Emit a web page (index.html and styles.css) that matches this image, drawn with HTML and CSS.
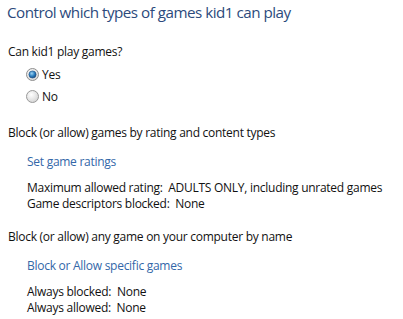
FILE: index.html
```html
<!DOCTYPE html>
<html>
<head>
<meta charset="utf-8">
<link rel="stylesheet" href="styles.css">
</head>
<body>
<div class="page">
  <h1 class="title">Control which types of games kid1 can play</h1>
  <p class="question">Can kid1 play games?</p>
  <div class="radios">
    <label class="radio">
      <svg class="radio-icon" width="13" height="13" viewBox="0 0 13 13">
        <defs>
          <radialGradient id="rg1" cx="0.4" cy="0.35" r="0.7">
            <stop offset="0" stop-color="#ffffff"/>
            <stop offset="1" stop-color="#d4d4d4"/>
          </radialGradient>
          <radialGradient id="dot" cx="0.4" cy="0.35" r="0.7">
            <stop offset="0" stop-color="#9fd3f2"/>
            <stop offset="0.55" stop-color="#2b7fc0"/>
            <stop offset="1" stop-color="#17457a"/>
          </radialGradient>
        </defs>
        <circle cx="6.5" cy="6.5" r="6" fill="url(#rg1)" stroke="#8f8f8f" stroke-width="1"/>
        <circle cx="6.5" cy="6.5" r="3.6" fill="url(#dot)" stroke="#1d4f84" stroke-width="0.6"/>
      </svg>
      <span>Yes</span>
    </label>
    <label class="radio">
      <svg class="radio-icon" width="13" height="13" viewBox="0 0 13 13">
        <defs>
          <radialGradient id="rg2" cx="0.4" cy="0.35" r="0.75">
            <stop offset="0" stop-color="#ffffff"/>
            <stop offset="1" stop-color="#cfcfcf"/>
          </radialGradient>
        </defs>
        <circle cx="6.5" cy="6.5" r="6" fill="url(#rg2)" stroke="#9a9a9a" stroke-width="1"/>
      </svg>
      <span>No</span>
    </label>
  </div>

  <p class="section">Block (or allow) games by rating and content types</p>
  <div class="sub">
    <a class="link" href="#">Set game ratings</a>
    <div class="info">
      <div>Maximum allowed rating:&nbsp; ADULTS ONLY, including unrated games</div>
      <div>Game descriptors blocked:&nbsp; None</div>
    </div>
  </div>

  <p class="section section-2">Block (or allow) any game on your computer by name</p>
  <div class="sub">
    <a class="link" href="#">Block or Allow specific games</a>
    <div class="info">
      <div>Always blocked:&nbsp; None</div>
      <div>Always allowed:&nbsp; None</div>
    </div>
  </div>
</div>
</body>
</html>
```

FILE: styles.css
```css
html, body {
  margin: 0;
  padding: 0;
  background: #ffffff;
}

body {
  font-family: "Open Sans", "Noto Sans", "DejaVu Sans", sans-serif;
  font-size: 12px;
  letter-spacing: -0.27px;
  color: #111111;
}

.page {
  padding: 1px 0 0 8px;
}

.title {
  margin: 0 0 0 -1px;
  font-size: 15.2px;
  letter-spacing: -0.5px;
  font-weight: normal;
  line-height: 22px;
  color: #2c4a7c;
}

.question {
  margin: 20px 0 0 0;
  line-height: 17px;
}

.radios {
  display: flex;
  flex-direction: column;
  gap: 5px;
  margin: 6px 0 0 18px;
}

.radio {
  display: flex;
  align-items: center;
  gap: 3px;
  height: 17px;
  line-height: 17px;
}

.radio-icon {
  display: block;
}

.section {
  margin: 19px 0 0 0;
  line-height: 17px;
}

.section-2 {
  margin-top: 16px;
}

.sub {
  padding-left: 19px;
  display: flex;
  flex-direction: column;
  align-items: flex-start;
}

.link {
  margin-top: 12px;
  line-height: 17px;
  color: #3367a8;
  text-decoration: none;
}

.info {
  margin-top: 10px;
  line-height: 16px;
}
```
